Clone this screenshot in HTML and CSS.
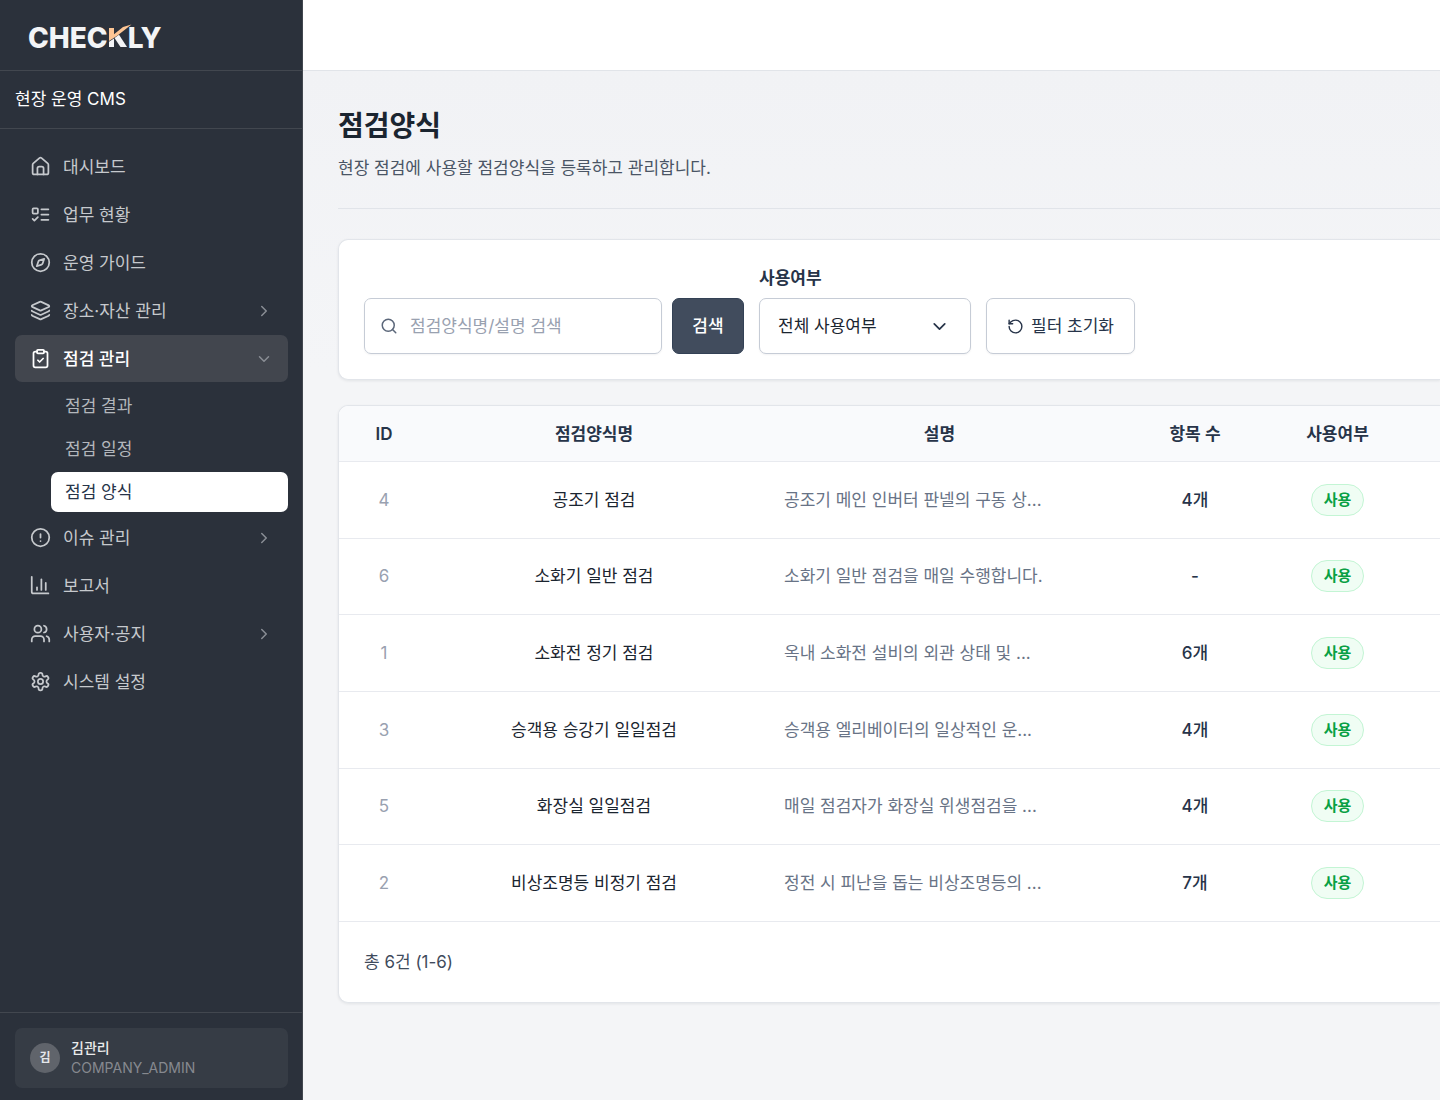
FILE: index.html
```
<!DOCTYPE html>
<html lang="ko">

<head>
  <meta charset="UTF-8" />
  <meta name="viewport" content="width=device-width, initial-scale=1.0" />
  <title>점검양식 - CHECKLY</title>
  <link rel="stylesheet" href="styles.css">
</head>

<body>
  <aside class="sidebar">
    <a href="#" class="logo" aria-label="CHECKLY">
      <span>CHEC</span>
      <svg class="logo-k" width="24" height="24" viewBox="0 0 24 24">
        <path d="M1 17.8 6 14.5V23H1z" fill="#f3f4f6" />
        <path d="M6.5 14 11 10.8 19 23H12.5z" fill="#f3f4f6" />
        <path d="M1 4H6V10.2L15 3 23.5 0.5 9.5 11.5 1 17z" fill="#fdc594" />
      </svg>
      <span>LY</span>
    </a>
    <div class="site-name">현장 운영 CMS</div>

    <nav class="menu">
      <a href="#" class="menu-item">
        <svg class="icon" viewBox="0 0 24 24"><path d="M8.5 21v-7a2 2 0 0 1 2-2h3a2 2 0 0 1 2 2v7" /><path d="M3 10a2 2 0 0 1 .709-1.528l7-5.999a2 2 0 0 1 2.582 0l7 5.999A2 2 0 0 1 21 10v9a2 2 0 0 1-2 2H5a2 2 0 0 1-2-2z" /></svg>
        대시보드
      </a>
      <a href="#" class="menu-item">
        <svg class="icon" viewBox="0 0 24 24"><rect x="3" y="5" width="6" height="6" rx="1" /><path d="m3 17 2 2 4-4" /><path d="M13 6h8" /><path d="M13 12h8" /><path d="M13 18h8" /></svg>
        업무 현황
      </a>
      <a href="#" class="menu-item">
        <svg class="icon" viewBox="0 0 24 24"><path d="m16.24 7.76-1.804 5.411a2 2 0 0 1-1.265 1.265L7.76 16.24l1.804-5.411a2 2 0 0 1 1.265-1.265z" /><circle cx="12" cy="12" r="10" /></svg>
        운영 가이드
      </a>
      <button type="button" class="menu-item">
        <svg class="icon" viewBox="0 0 24 24"><path d="M12.83 2.18a2 2 0 0 0-1.66 0L2.6 6.08a1 1 0 0 0 0 1.83l8.58 3.91a2 2 0 0 0 1.66 0l8.58-3.9a1 1 0 0 0 0-1.83z" /><path d="M2 12a1 1 0 0 0 .58.91l8.6 3.91a2 2 0 0 0 1.65 0l8.58-3.9A1 1 0 0 0 22 12" /><path d="M2 17a1 1 0 0 0 .58.91l8.6 3.91a2 2 0 0 0 1.65 0l8.58-3.9A1 1 0 0 0 22 17" /></svg>
        장소·자산 관리
        <svg class="icon arrow" viewBox="0 0 24 24"><path d="m9 18 6-6-6-6" /></svg>
      </button>
      <button type="button" class="menu-item open" aria-expanded="true">
        <svg class="icon" viewBox="0 0 24 24"><rect x="8" y="2" width="8" height="4" rx="1" /><path d="M16 4h2a2 2 0 0 1 2 2v14a2 2 0 0 1-2 2H6a2 2 0 0 1-2-2V6a2 2 0 0 1 2-2h2" /><path d="m9 14 2 2 4-4" /></svg>
        점검 관리
        <svg class="icon arrow" viewBox="0 0 24 24"><path d="m6 9 6 6 6-6" /></svg>
      </button>
      <div class="submenu">
        <a href="#">점검 결과</a>
        <a href="#">점검 일정</a>
        <a href="#" class="active">점검 양식</a>
      </div>
      <button type="button" class="menu-item">
        <svg class="icon" viewBox="0 0 24 24"><circle cx="12" cy="12" r="10" /><path d="M12 8v4" /><path d="M12 16h.01" /></svg>
        이슈 관리
        <svg class="icon arrow" viewBox="0 0 24 24"><path d="m9 18 6-6-6-6" /></svg>
      </button>
      <a href="#" class="menu-item">
        <svg class="icon" viewBox="0 0 24 24"><path d="M2 2v17a2 2 0 0 0 2 2h17" /><path d="M8 17v-3" /><path d="M13 17V5" /><path d="M18 17V9" /></svg>
        보고서
      </a>
      <button type="button" class="menu-item">
        <svg class="icon" viewBox="0 0 24 24"><path d="M16 21v-2a4 4 0 0 0-4-4H6a4 4 0 0 0-4 4v2" /><circle cx="9" cy="7" r="4" /><path d="M22 21v-2a4 4 0 0 0-3-3.87" /><path d="M16 3.13a4 4 0 0 1 0 7.75" /></svg>
        사용자·공지
        <svg class="icon arrow" viewBox="0 0 24 24"><path d="m9 18 6-6-6-6" /></svg>
      </button>
      <a href="#" class="menu-item">
        <svg class="icon" viewBox="0 0 24 24"><path d="M12.22 2h-.44a2 2 0 0 0-2 2v.18a2 2 0 0 1-1 1.73l-.43.25a2 2 0 0 1-2 0l-.15-.08a2 2 0 0 0-2.73.73l-.22.38a2 2 0 0 0 .73 2.73l.15.1a2 2 0 0 1 1 1.72v.51a2 2 0 0 1-1 1.74l-.15.09a2 2 0 0 0-.73 2.73l.22.38a2 2 0 0 0 2.73.73l.15-.08a2 2 0 0 1 2 0l.43.25a2 2 0 0 1 1 1.73V20a2 2 0 0 0 2 2h.44a2 2 0 0 0 2-2v-.18a2 2 0 0 1 1-1.73l.43-.25a2 2 0 0 1 2 0l.15.08a2 2 0 0 0 2.73-.73l.22-.39a2 2 0 0 0-.73-2.73l-.15-.08a2 2 0 0 1-1-1.74v-.5a2 2 0 0 1 1-1.74l.15-.09a2 2 0 0 0 .73-2.73l-.22-.38a2 2 0 0 0-2.73-.73l-.15.08a2 2 0 0 1-2 0l-.43-.25a2 2 0 0 1-1-1.73V4a2 2 0 0 0-2-2z" /><circle cx="12" cy="12" r="3" /></svg>
        시스템 설정
      </a>
    </nav>

    <div class="sidebar-footer">
      <div class="user">
        <span class="avatar">김</span>
        <div>
          <div class="user-name">김관리</div>
          <div class="user-role">COMPANY_ADMIN</div>
        </div>
      </div>
    </div>
  </aside>

  <div class="page">
    <header class="topbar"></header>

    <main>
      <div class="page-header">
        <h1>점검양식</h1>
        <p>현장 점검에 사용할 점검양식을 등록하고 관리합니다.</p>
      </div>

      <form class="card filters">
        <div class="search">
          <label class="search-box">
            <svg class="icon" viewBox="0 0 24 24"><circle cx="11" cy="11" r="8" /><path d="m21 21-4.3-4.3" /></svg>
            <input type="text" name="keyword" placeholder="점검양식명/설명 검색" aria-label="점검양식명/설명 검색" />
          </label>
          <button type="submit" class="search-btn">검색</button>
        </div>
        <div class="field">
          <label for="useYn">사용여부</label>
          <div class="select">
            <select id="useYn" name="useYn">
              <option>전체 사용여부</option>
            </select>
            <svg class="icon" viewBox="0 0 24 24"><path d="m6 9 6 6 6-6" /></svg>
          </div>
        </div>
        <button type="reset" class="reset-btn">
          <svg class="icon" viewBox="0 0 24 24"><path d="M3 12a9 9 0 1 0 9-9 9.75 9.75 0 0 0-6.74 2.74L3 8" /><path d="M3 3v5h5" /></svg>
          필터 초기화
        </button>
      </form>

      <section class="card">
        <table>
          <colgroup>
            <col class="col-id">
            <col class="col-name">
            <col class="col-desc">
            <col class="col-count">
            <col class="col-use">
            <col>
          </colgroup>
          <thead>
            <tr>
              <th>ID</th>
              <th>점검양식명</th>
              <th>설명</th>
              <th>항목 수</th>
              <th>사용여부</th>
              <th></th>
            </tr>
          </thead>
          <tbody>
            <tr>
              <td class="id">4</td>
              <td class="name">공조기 점검</td>
              <td class="desc">공조기 메인 인버터 판넬의 구동 상...</td>
              <td>4개</td>
              <td><span class="badge">사용</span></td>
              <td></td>
            </tr>
            <tr>
              <td class="id">6</td>
              <td class="name">소화기 일반 점검</td>
              <td class="desc">소화기 일반 점검을 매일 수행합니다.</td>
              <td>-</td>
              <td><span class="badge">사용</span></td>
              <td></td>
            </tr>
            <tr>
              <td class="id">1</td>
              <td class="name">소화전 정기 점검</td>
              <td class="desc">옥내 소화전 설비의 외관 상태 및 ...</td>
              <td>6개</td>
              <td><span class="badge">사용</span></td>
              <td></td>
            </tr>
            <tr>
              <td class="id">3</td>
              <td class="name">승객용 승강기 일일점검</td>
              <td class="desc">승객용 엘리베이터의 일상적인 운...</td>
              <td>4개</td>
              <td><span class="badge">사용</span></td>
              <td></td>
            </tr>
            <tr>
              <td class="id">5</td>
              <td class="name">화장실 일일점검</td>
              <td class="desc">매일 점검자가 화장실 위생점검을 ...</td>
              <td>4개</td>
              <td><span class="badge">사용</span></td>
              <td></td>
            </tr>
            <tr>
              <td class="id">2</td>
              <td class="name">비상조명등 비정기 점검</td>
              <td class="desc">정전 시 피난을 돕는 비상조명등의 ...</td>
              <td>7개</td>
              <td><span class="badge">사용</span></td>
              <td></td>
            </tr>
          </tbody>
        </table>
        <div class="total">총 6건 (1-6)</div>
      </section>
    </main>
  </div>
</body>

</html>
```
FILE: styles.css
```
* {
  box-sizing: border-box;
}

body {
  margin: 0;
  display: flex;
  min-height: 100vh;
  font-family: Inter, 'Noto Sans CJK KR', sans-serif;
  font-size: 17px;
  line-height: 24px;
  color: #273449;
  background-color: #f4f5f7;
}

button,
input,
select {
  font: inherit;
  color: inherit;
}

button {
  cursor: pointer;
}

.icon {
  width: 21px;
  height: 21px;
  flex-shrink: 0;
  fill: none;
  stroke: currentColor;
  stroke-width: 2;
  stroke-linecap: round;
  stroke-linejoin: round;
}

/* sidebar */
.sidebar {
  width: 303px;
  flex-shrink: 0;
  display: flex;
  flex-direction: column;
  background-color: #2b313b;
  border-right: 1px solid #42474f;
  color: #c6c9cd;
}

.logo {
  height: 71px;
  padding: 5px 28px 0;
  display: flex;
  align-items: center;
  border-bottom: 1px solid #42474f;
  font-size: 28px;
  font-weight: 800;
  color: #f3f4f6;
  text-decoration: none;
}

.logo-k {
  margin: 0 -4px 4px 0;
}

.site-name {
  padding: 16px 15px 17px;
  border-bottom: 1px solid #42474f;
  color: #fff;
}

.menu {
  flex: 1;
  display: flex;
  flex-direction: column;
  gap: 1px;
  padding: 14px 14px 14px 15px;
}

.menu-item {
  display: flex;
  align-items: center;
  gap: 12px;
  height: 47px;
  padding: 0 15px;
  border: none;
  border-radius: 7px;
  background: none;
  color: #c6c9cd;
  text-align: left;
  text-decoration: none;
}

.menu-item.open {
  background-color: #42464e;
  color: #fff;
  font-weight: 500;
}

.menu-item .arrow {
  width: 18px;
  height: 18px;
  margin-left: auto;
  color: #8a8e95;
}

.submenu {
  display: flex;
  flex-direction: column;
  gap: 3px;
  margin: 3px 0 1px 36px;
}

.submenu a {
  height: 40px;
  padding: 8px 14px;
  border-radius: 7px;
  color: #b3b7bc;
  text-decoration: none;
}

.submenu .active {
  background-color: #fff;
  color: #273449;
}

.sidebar-footer {
  padding: 15px 14px 12px 15px;
  border-top: 1px solid #42474f;
}

.user {
  display: flex;
  align-items: center;
  gap: 11px;
  padding: 10px 15px;
  border-radius: 7px;
  background-color: #363c45;
  font-size: 14px;
  line-height: 20px;
}

.avatar {
  width: 30px;
  height: 30px;
  border-radius: 50%;
  background-color: #60646b;
  font-size: 12px;
  font-weight: 600;
  line-height: 30px;
  text-align: center;
  color: #e5e7eb;
}

.user-name {
  font-weight: 500;
  color: #e9eaeb;
}

.user-role {
  color: #86898f;
}

/* page */
.page {
  flex: 1;
  min-width: 0;
}

.topbar {
  height: 71px;
  background-color: #fff;
  border-bottom: 1px solid #e1e4e9;
}

main {
  padding: 37px 0 36px 35px;
  background: linear-gradient(#f1f2f5, #f4f5f7 300px);
}

.page-header {
  margin-bottom: 30px;
  padding-bottom: 28px;
  border-bottom: 1px solid #e1e4e9;
}

h1 {
  margin: 0 0 12px;
  font-size: 28px;
  font-weight: 700;
  line-height: 36px;
  color: #1b2530;
}

.page-header p {
  margin: 0;
  color: #4a5565;
}

/* cards run to the window's right edge */
.card {
  border: 1px solid #e2e5ea;
  border-right: none;
  border-radius: 10px 0 0 10px;
  background-color: #fff;
  box-shadow: 0 1px 3px rgba(15, 23, 42, 0.08);
  overflow: hidden;
}

.filters {
  display: flex;
  align-items: flex-end;
  gap: 15px;
  margin-bottom: 25px;
  padding: 26px 25px 25px;
}

.search {
  display: flex;
  gap: 10px;
}

.search-box {
  display: flex;
  align-items: center;
  gap: 12px;
  width: 298px;
  height: 56px;
  padding: 0 15px;
  border: 1px solid #c6ccd6;
  border-radius: 7px;
  box-shadow: 0 1px 2px rgba(15, 23, 42, 0.05);
}

.search-box .icon {
  width: 18px;
  height: 18px;
  color: #5b677a;
}

.search-box input {
  flex: 1;
  min-width: 0;
  padding: 0;
  border: none;
  outline: none;
  background: none;
}

.search-box input::placeholder {
  color: #99a1b0;
}

.search-btn {
  width: 72px;
  height: 56px;
  padding: 0;
  border: 1px solid #334155;
  border-radius: 7px;
  background-color: #414c5d;
  font-weight: 500;
  color: #fff;
}

.field {
  display: flex;
  flex-direction: column;
  gap: 8px;
}

.field label {
  font-weight: 600;
}

.select {
  display: grid;
  align-items: center;
  width: 212px;
}

.select select,
.select .icon {
  grid-area: 1 / 1;
}

.select select {
  appearance: none;
  height: 56px;
  padding: 0 18px;
  border: 1px solid #c6ccd6;
  border-radius: 7px;
  background-color: #fff;
  box-shadow: 0 1px 2px rgba(15, 23, 42, 0.05);
  color: #1b2530;
}

.select .icon {
  justify-self: end;
  margin-right: 21px;
  pointer-events: none;
}

.reset-btn {
  display: flex;
  align-items: center;
  gap: 7px;
  height: 56px;
  padding: 0 20px;
  border: 1px solid #c6ccd6;
  border-radius: 7px;
  background-color: #fff;
  box-shadow: 0 1px 2px rgba(15, 23, 42, 0.05);
}

.reset-btn .icon {
  width: 17px;
  height: 17px;
}

/* table */
table {
  width: 100%;
  height: 516px;
  table-layout: fixed;
  border-collapse: separate;
  border-spacing: 0;
  text-align: center;
}

.col-id {
  width: 90px;
}

.col-name {
  width: 330px;
}

.col-desc {
  width: 361px;
}

.col-count {
  width: 150px;
}

.col-use {
  width: 135px;
}

th,
td {
  padding: 0 25px;
  border-bottom: 1px solid #e8eaef;
  white-space: nowrap;
}

th {
  height: 56px;
  background-color: #f9fafc;
  font-weight: 600;
}

td {
  height: 76px;
  font-weight: 500;
}

th:nth-child(5),
td:nth-child(5) {
  padding: 0;
}

.id {
  font-weight: 400;
  color: #99a1b0;
}

.name {
  font-weight: 400;
  color: #1b2530;
}

.desc {
  font-weight: 400;
  text-align: left;
  color: #687386;
}

.badge {
  display: inline-block;
  padding: 3px 12px;
  border: 1px solid #c3f5d4;
  border-radius: 16px;
  background-color: #f0fdf4;
  font-size: 15px;
  font-weight: 600;
  color: #09a044;
}

.total {
  padding: 28px 25px;
  color: #3f4b5c;
}
```
